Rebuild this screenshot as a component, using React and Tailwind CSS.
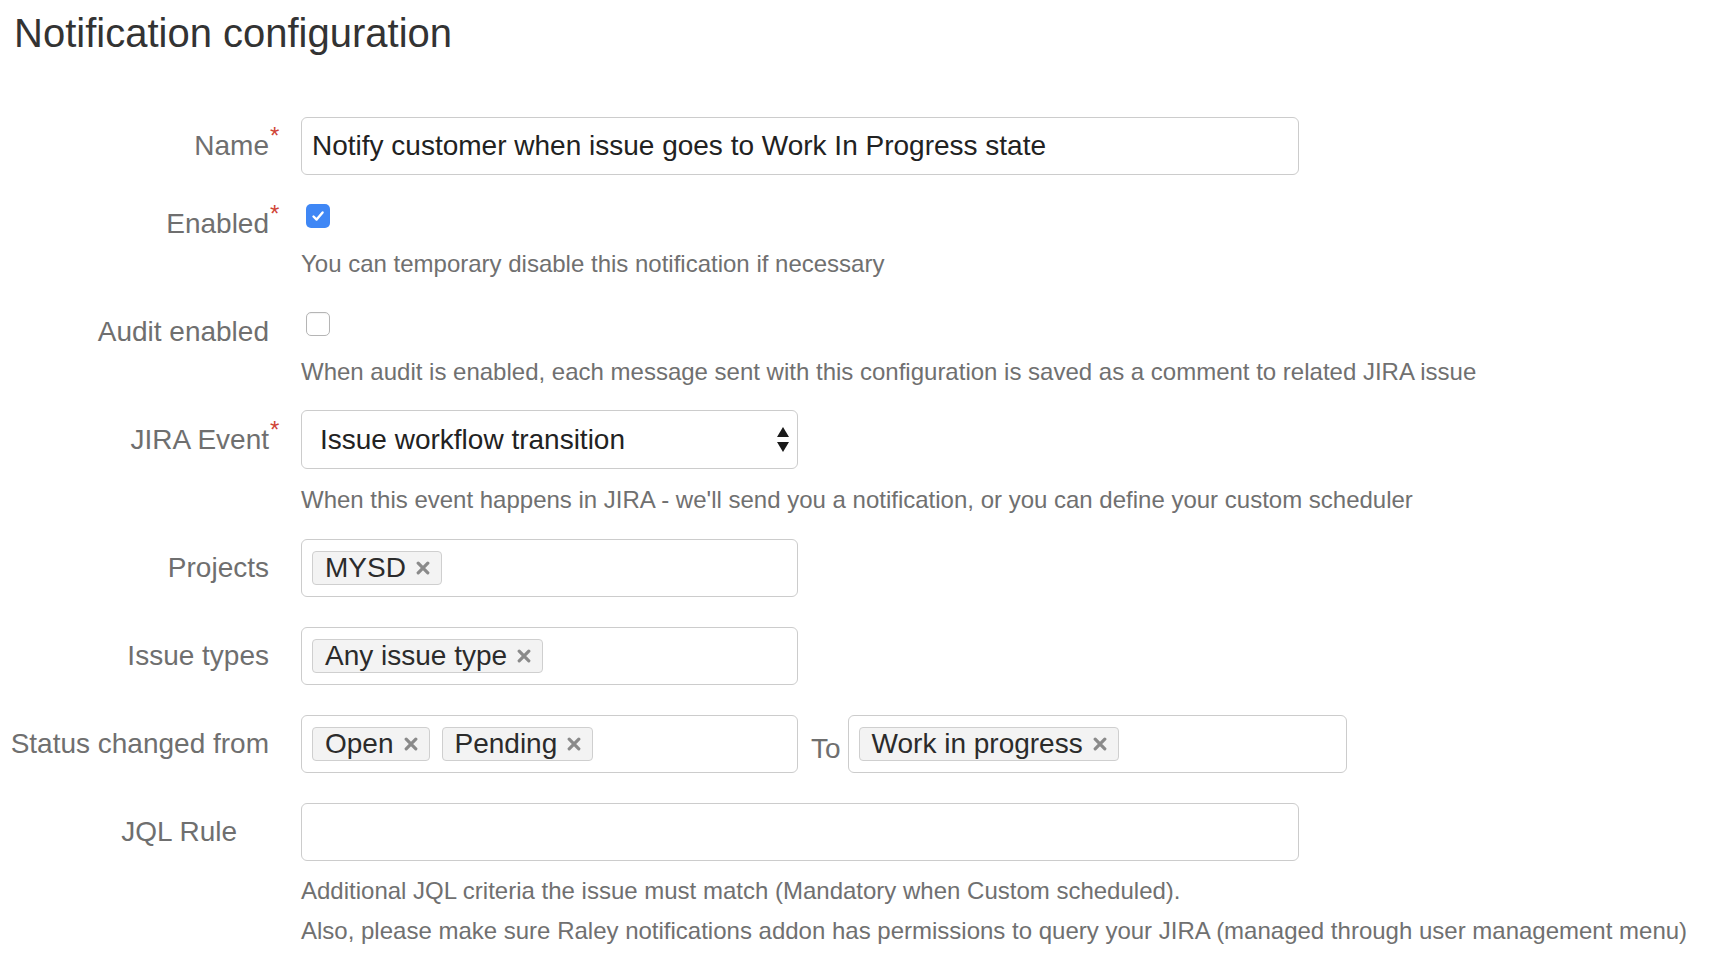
import React from 'react';

const FONT = { fontFamily: '"Liberation Sans", Arial, Helvetica, sans-serif' };

const Label = ({ children, required, className = '' }) => (
  <div className={`w-[269px] shrink-0 text-right whitespace-nowrap text-[28px] leading-[32px] text-[#6f6f6f] ${className}`}>
    <span className="relative">
      {children}
      {required && (
        <span className="absolute left-[calc(100%+1px)] top-[-6px] text-[24px] leading-none text-[#d04437]">*</span>
      )}
    </span>
  </div>
);

const Help = ({ children, className = '' }) => (
  <p className={`text-[24px] leading-[28px] text-[#707070] whitespace-nowrap ${className}`}>{children}</p>
);

const RemoveIcon = () => (
  <svg width="14" height="14" viewBox="0 0 14 14" className="shrink-0">
    <path d="M2.2 2.2 L11.8 11.8 M11.8 2.2 L2.2 11.8" stroke="#8a8a8a" strokeWidth="3.2" strokeLinecap="round" />
  </svg>
);

const Chip = ({ label }) => (
  <span className="flex items-center gap-[10px] h-[34px] pl-[12px] pr-[11px] bg-[#f3f3f3] border border-[#cfcfcf] rounded-[4px] text-[28px] leading-none text-[#2b2b2b]">
    {label}
    <RemoveIcon />
  </span>
);

const TagBox = ({ tags, width = 'w-[497px]' }) => (
  <div className={`${width} h-[58px] shrink-0 flex items-center gap-[12px] pl-[10px] border border-[#cccccc] rounded-[6px] bg-white`}>
    {tags.map((t) => (
      <Chip key={t} label={t} />
    ))}
  </div>
);

const Checkbox = ({ checked }) =>
  checked ? (
    <span className="ml-[5px] flex items-center justify-center w-[24px] h-[24px] rounded-[5px] bg-[#3f87f5]">
      <svg width="16" height="16" viewBox="0 0 16 16">
        <path d="M3.5 8.5 L6.6 11.6 L12.6 4.4" fill="none" stroke="white" strokeWidth="2.4" strokeLinecap="round" strokeLinejoin="round" />
      </svg>
    </span>
  ) : (
    <span className="ml-[5px] block w-[24px] h-[24px] rounded-[5px] border border-[#b5b5b5] bg-white shadow-[inset_0_1px_1px_rgba(0,0,0,0.05)]" />
  );

export default function App() {
  return (
    <div className="min-h-screen bg-white" style={FONT}>
      <h1 className="pl-[14px] pt-[11px] text-[40px] leading-[44px] font-normal text-[#333333]">Notification configuration</h1>

      {/* Name */}
      <div className="flex items-center mt-[62px]">
        <Label required>Name</Label>
        <input
          readOnly
          value="Notify customer when issue goes to Work In Progress state"
          className="ml-[32px] w-[998px] h-[58px] pl-[10px] border border-[#cccccc] rounded-[6px] text-[28px] text-[#222222] bg-white outline-none"
          style={FONT}
        />
      </div>

      {/* Enabled */}
      <div className="flex items-start mt-[29px]">
        <Label required className="mt-[4px]">Enabled</Label>
        <div className="ml-[32px]">
          <Checkbox checked />
          <Help className="mt-[22px]">You can temporary disable this notification if necessary</Help>
        </div>
      </div>

      {/* Audit enabled */}
      <div className="flex items-start mt-[34px]">
        <Label className="mt-[4px]">Audit enabled</Label>
        <div className="ml-[32px]">
          <Checkbox />
          <Help className="mt-[22px]">
            When audit is enabled, each message sent with this configuration is saved as a comment to related JIRA issue
          </Help>
        </div>
      </div>

      {/* JIRA Event */}
      <div className="flex items-start mt-[24px]">
        <Label required className="mt-[14px]">JIRA Event</Label>
        <div className="ml-[32px]">
          <div className="w-[497px] h-[59px] flex items-center justify-between pl-[18px] pr-[8px] border border-[#cccccc] rounded-[6px] bg-white text-[28px] text-[#222222]">
            <span>Issue workflow transition</span>
            <svg width="12" height="26" viewBox="0 0 12 26">
              <path d="M6 0 L12 10 L0 10 Z" fill="#1a1a1a" />
              <path d="M0 15 L12 15 L6 25 Z" fill="#1a1a1a" />
            </svg>
          </div>
          <Help className="mt-[17px]">
            When this event happens in JIRA - we'll send you a notification, or you can define your custom scheduler
          </Help>
        </div>
      </div>

      {/* Projects */}
      <div className="flex items-center mt-[25px]">
        <Label>Projects</Label>
        <div className="ml-[32px]">
          <TagBox tags={['MYSD']} />
        </div>
      </div>

      {/* Issue types */}
      <div className="flex items-center mt-[30px]">
        <Label>Issue types</Label>
        <div className="ml-[32px]">
          <TagBox tags={['Any issue type']} />
        </div>
      </div>

      {/* Status changed */}
      <div className="flex items-center mt-[30px]">
        <Label>Status changed from</Label>
        <div className="ml-[32px] flex items-center">
          <TagBox tags={['Open', 'Pending']} />
          <span className="ml-[13px] mr-[7px] pt-[9px] text-[28px] leading-[32px] text-[#6f6f6f]">To</span>
          <TagBox tags={['Work in progress']} width="w-[499px]" />
        </div>
      </div>

      {/* JQL Rule */}
      <div className="flex items-start mt-[30px]">
        <Label className="mt-[13px] pr-[32px]">JQL Rule</Label>
        <div className="ml-[32px]">
          <input
            readOnly
            value=""
            className="w-[998px] h-[58px] pl-[10px] border border-[#cccccc] rounded-[6px] text-[28px] bg-white outline-none"
            style={FONT}
          />
          <Help className="mt-[16px]">Additional JQL criteria the issue must match (Mandatory when Custom scheduled).</Help>
          <Help className="mt-[12px]">
            Also, please make sure Raley notifications addon has permissions to query your JIRA (managed through user management menu)
          </Help>
        </div>
      </div>
    </div>
  );
}
